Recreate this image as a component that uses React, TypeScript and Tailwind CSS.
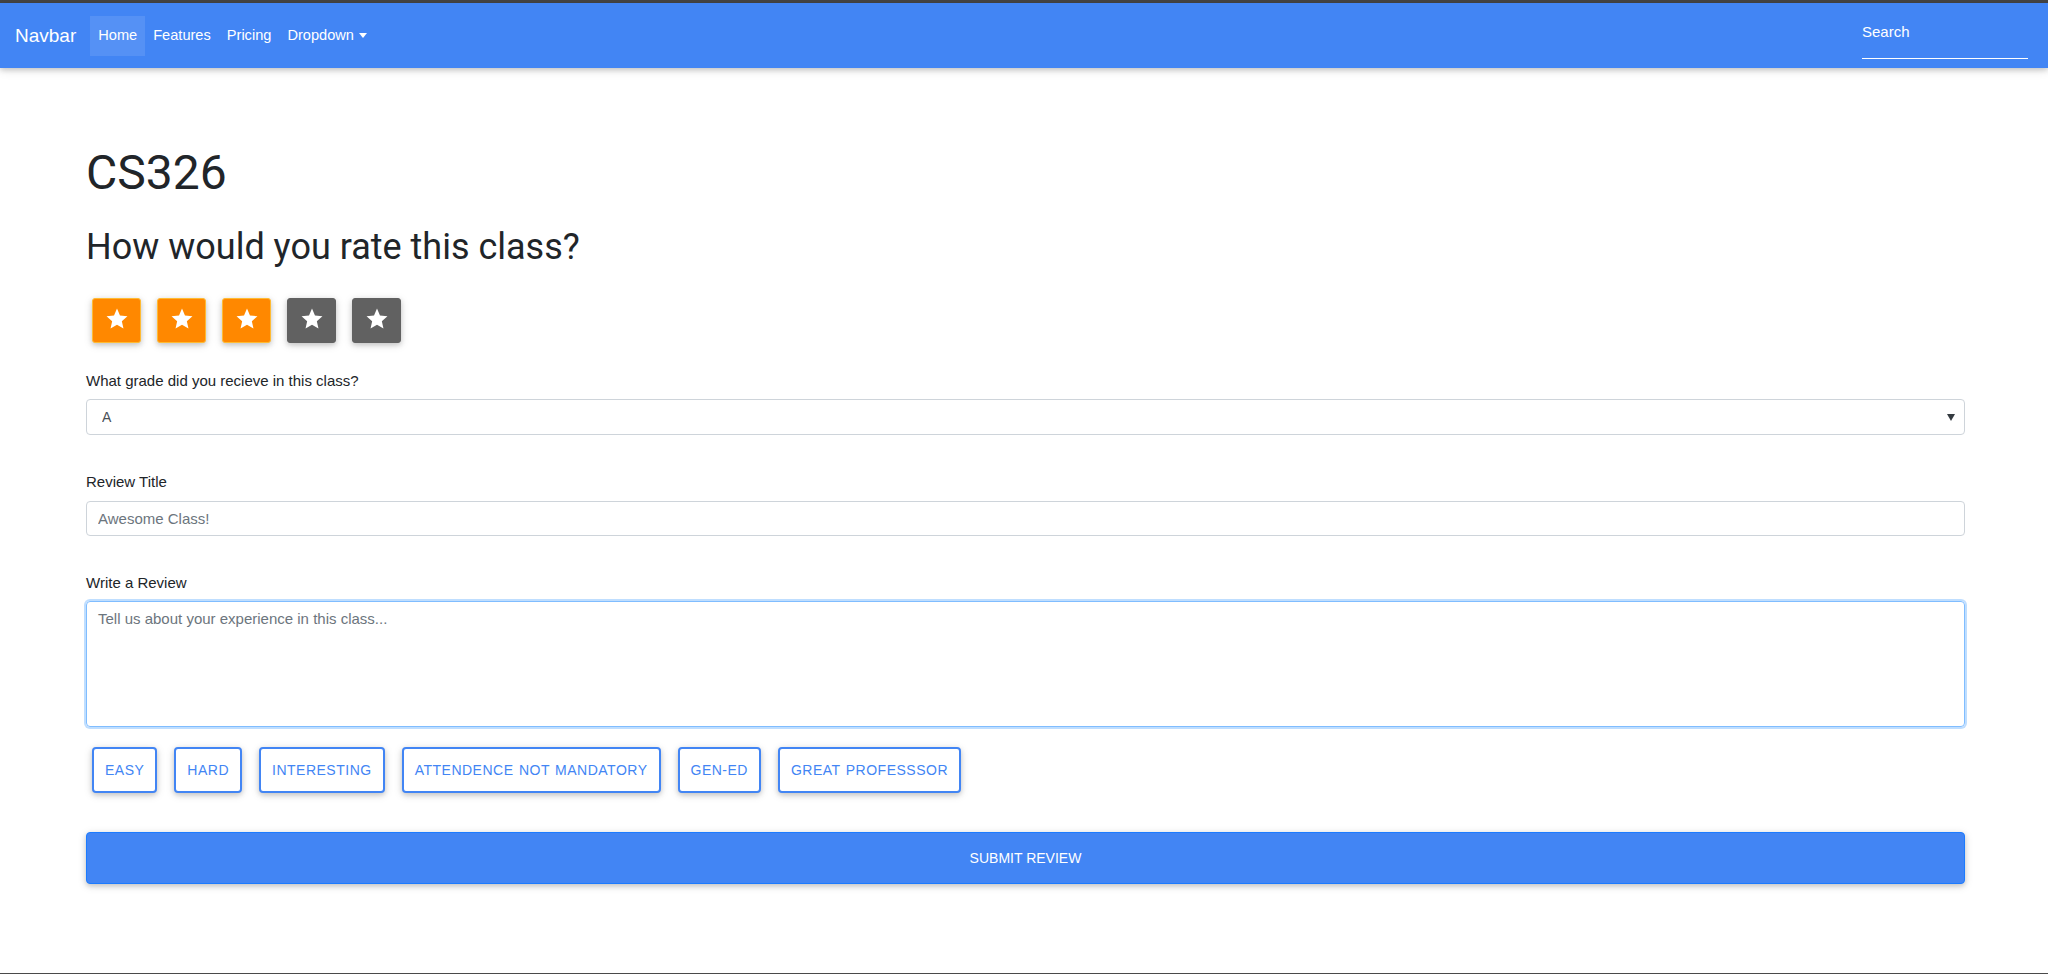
import React from "react";

const tags = [
	"Easy",
	"Hard",
	"Interesting",
	"Attendence not mandatory",
	"Gen-Ed",
	"Great Professsor",
];

const Navbar = () => (
	<nav className="flex h-[65px] items-center bg-[#4285f4] pl-[15px] pr-[20px] text-white shadow-[0_2px_5px_0_rgba(0,0,0,0.16),0_2px_10px_0_rgba(0,0,0,0.12)] relative z-10">
		<a className="mr-[14px] text-[19px] leading-none">Navbar</a>
		<ul className="flex items-center text-[14.6px]">
			<li className="flex h-[40px] items-center bg-white/10 px-2">Home</li>
			<li className="flex h-[40px] items-center px-2">Features</li>
			<li className="flex h-[40px] items-center px-2">Pricing</li>
			<li className="flex h-[40px] items-center px-2">
				Dropdown
				<svg width="8" height="5" viewBox="0 0 8 5" className="ml-[5px]">
					<polygon points="0,0 8,0 4,5" fill="#fff" />
				</svg>
			</li>
		</ul>
		<input
			type="text"
			placeholder="Search"
			className="ml-auto mt-[8px] h-[38px] w-[166px] border-b border-white bg-transparent pb-[16px] text-[15px] text-white outline-none placeholder:text-white"
		/>
	</nav>
);

const StarBox = ({ on }: { on: boolean }) => (
	<div
		className={
			on
				? "flex h-[45px] w-[49px] items-center justify-center rounded-[3px] border border-[#ffbb33] bg-[#ff8800] shadow-[0_2px_5px_0_rgba(0,0,0,0.16),0_2px_10px_0_rgba(0,0,0,0.12)]"
				: "flex h-[45px] w-[49px] items-center justify-center rounded-[3px] border border-[#616161] bg-[#616161] shadow-[0_2px_5px_0_rgba(0,0,0,0.16),0_2px_10px_0_rgba(0,0,0,0.12)]"
		}>
		<svg width="22" height="21" viewBox="0 0 20 19" className="mb-[4px]">
			<polygon
				points="10,0.5 12.7,6.8 19.51,7.41 14.4,12 15.88,18.59 10,15.1 4.12,18.59 5.6,12 0.49,7.41 7.3,6.8"
				fill="#fff"
			/>
		</svg>
	</div>
);

export default function App() {
	return (
		<div className="flex h-[974px] flex-col overflow-hidden border-b border-[#4a4a4a] bg-white font-['Liberation_Sans',Arial,sans-serif] text-[#212529]">
			<div className="h-[3px] bg-[#454545]" />
			<Navbar />

			<main className="flex flex-col pl-[86px] pr-[83px]">
				<h1 className="mt-[77px] font-['Roboto',sans-serif] text-[48px] leading-[56px] font-normal">
					CS326
				</h1>
				<h2 className="mt-[24px] font-['Roboto',sans-serif] text-[36px] leading-[44px] font-normal">
					How would you rate this class?
				</h2>

				{/* rating */}
				<div className="ml-[6px] mt-[29px] flex gap-[16px]">
					<StarBox on />
					<StarBox on />
					<StarBox on />
					<StarBox on={false} />
					<StarBox on={false} />
				</div>

				<label className="mt-[27px] text-[15px] leading-[22px]">
					What grade did you recieve in this class?
				</label>
				<div className="relative mt-[7px]">
					<select className="h-[36px] w-full appearance-none rounded-[4px] border border-[#ced4da] bg-white pl-[15px] text-[14px] text-[#495057] outline-none">
						<option>A</option>
						<option>B</option>
						<option>C</option>
						<option>D</option>
						<option>F</option>
					</select>
					<svg
						width="8"
						height="7"
						viewBox="0 0 8 7"
						className="pointer-events-none absolute right-[10px] top-[15px]">
						<polygon points="0,0 8,0 4,7" fill="#343a40" />
					</svg>
				</div>

				<label className="mt-[36px] text-[15px] leading-[22px]">Review Title</label>
				<input
					type="text"
					placeholder="Awesome Class!"
					className="mt-[8px] h-[35px] w-full rounded-[4px] border border-[#ced4da] px-[11px] text-[15px] text-[#495057] outline-none placeholder:text-[#6c757d]"
				/>

				<label className="mt-[36px] text-[15px] leading-[22px]">Write a Review</label>
				<textarea
					placeholder="Tell us about your experience in this class..."
					className="mt-[7px] h-[126px] w-full resize-none rounded-[4px] border border-[#80bdff] px-[11px] pt-[6px] text-[15px] leading-[22px] text-[#495057] shadow-[0_0_0_2px_rgba(0,123,255,0.25)] outline-none placeholder:text-[#6c757d]"
				/>

				{/* tags */}
				<div className="ml-[6px] mt-[20px] flex gap-[17px]">
					{tags.map((t) => (
						<button
							key={t}
							className="h-[46px] rounded-[4px] border-2 border-[#4285f4] bg-white px-[11px] text-[14px] tracking-[0.5px] uppercase text-[#4285f4] shadow-[0_2px_5px_0_rgba(0,0,0,0.16),0_2px_10px_0_rgba(0,0,0,0.12)] [word-spacing:1px]">
							{t}
						</button>
					))}
				</div>

				<button className="mt-[39px] h-[52px] w-full rounded-[4px] border border-[#1c7bff] bg-[#4285f4] text-[14px] uppercase text-white shadow-[0_2px_5px_0_rgba(0,0,0,0.16),0_2px_10px_0_rgba(0,0,0,0.12)]">
					Submit Review
				</button>
			</main>
		</div>
	);
}
